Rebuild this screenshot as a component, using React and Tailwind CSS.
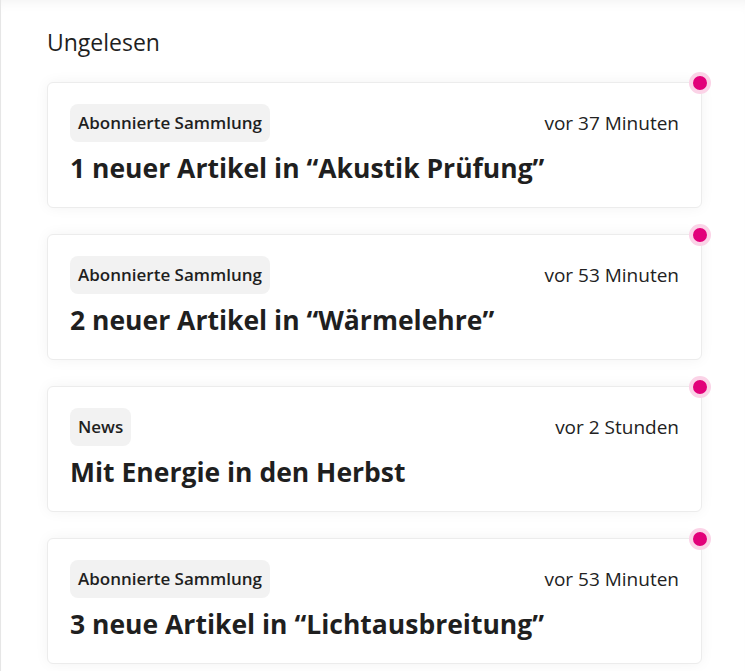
const items = [
  { tag: 'Abonnierte Sammlung', time: 'vor 37 Minuten', title: '1 neuer Artikel in “Akustik Prüfung”' },
  { tag: 'Abonnierte Sammlung', time: 'vor 53 Minuten', title: '2 neuer Artikel in “Wärmelehre”' },
  { tag: 'News', time: 'vor 2 Stunden', title: 'Mit Energie in den Herbst' },
  { tag: 'Abonnierte Sammlung', time: 'vor 53 Minuten', title: '3 neue Artikel in “Lichtausbreitung”' },
];

export default function App() {
  return (
    <div
      className="min-h-[671px] w-[745px] border-l border-[#e6e6e6] bg-white pl-[46px] pr-[43px] pt-[26px] text-[#1f1f1f] shadow-[inset_0_10px_14px_-10px_rgba(0,0,0,0.07)]"
      style={{ fontFamily: '"Open Sans", "Noto Sans", sans-serif' }}
    >
      <h2 className="text-[23px] leading-[32px] font-normal">Ungelesen</h2>
      <div className="mt-[24px] flex flex-col gap-[26px]">
        {items.map((item, i) => (
          <NotificationCard key={i} {...item} />
        ))}
      </div>
    </div>
  );
}

function NotificationCard({ tag, time, title }) {
  return (
    <div className="relative h-[126px] rounded-md border border-[#ececec] bg-white px-[22px] pt-[21px] shadow-[0_0_14px_rgba(0,0,0,0.05)]">
      <span className="absolute -top-[11px] -right-[10px] size-[22px] rounded-full border-4 border-[#fbd3e7] bg-[#e2007a]" />
      <div className="flex items-center justify-between">
        <span className="rounded-lg bg-[#f2f2f2] px-[8px] py-[8px] text-[17px] leading-[22px] font-semibold">{tag}</span>
        <span className="text-[19px] font-normal text-[#222]">{time}</span>
      </div>
      <h3 className="mt-[9px] text-[26.5px] leading-[34px] font-bold">{title}</h3>
    </div>
  );
}
